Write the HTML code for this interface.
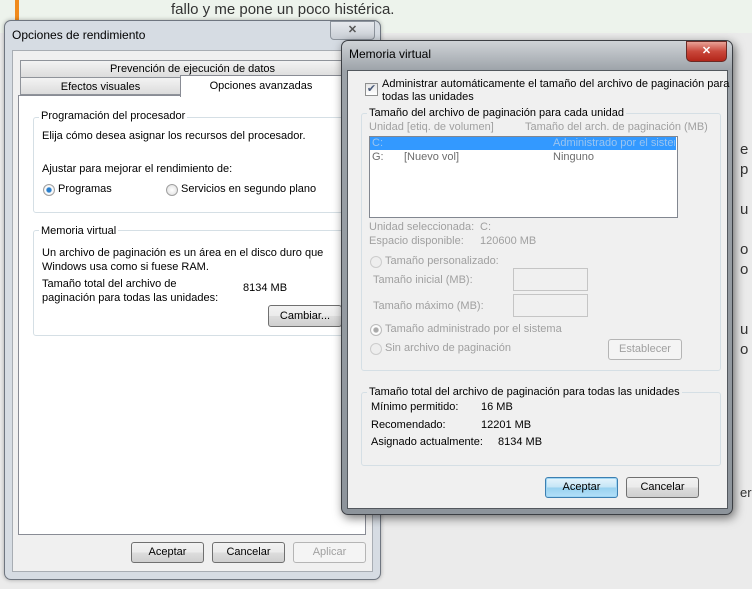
<!DOCTYPE html>
<html><head><meta charset="utf-8"><style>
*{box-sizing:border-box;margin:0;padding:0}
body{width:752px;height:589px;overflow:hidden;background:#ebebeb;font-family:"Liberation Sans",sans-serif;font-size:11px;color:#000;position:relative}
.a{position:absolute;white-space:nowrap}
.btn{position:absolute;border:1px solid #707070;border-radius:3px;background:linear-gradient(#f2f2f2 0,#ebebeb 50%,#dddddd 51%,#cfcfcf 100%);text-align:center;line-height:18px;font-size:11px}
.grp{position:absolute;border:1px solid #d5dfe5;border-radius:3px}
.lbl{position:absolute;background:inherit;padding:0 2px;white-space:nowrap}
.dis{color:#a0a0a0}
.radio{position:absolute;width:12px;height:12px;border-radius:50%;border:1px solid #a0a0a0;background:radial-gradient(#fff,#ddd)}
</style></head><body>
<div class="a" style="left:0;top:0;width:752px;height:33px;background:#edf3ec"></div>
<div class="a" style="left:15px;top:0;width:4px;height:22px;background:#f08a1c"></div>
<div class="a" style="left:171px;top:1px;font-size:15px;color:#333">fallo y me pone un poco histérica.</div>
<div class="a" style="left:740px;top:140px;font-size:15px;color:#333;line-height:20px">e<br>p<br><br>u<br><br>o<br>o<br><br><br>u<br>o<br></div>
<div class="a" style="left:740px;top:485px;font-size:13px;color:#333">er</div>

<div class="a" style="left:4px;top:20px;width:377px;height:560px;background:#d6dce3;border:1px solid #6f7680;border-radius:7px;box-shadow:0 0 4px rgba(0,0,0,.3)"></div>
<div class="a" style="left:12px;top:28px;font-size:12px">Opciones de rendimiento</div>
<div class="a" style="left:330px;top:21px;width:45px;height:19px;border:1px solid #8c939c;border-radius:0 0 4px 4px;background:linear-gradient(#e6e9ed,#c9ced5);text-align:center;color:#555;font-weight:bold;line-height:17px">✕</div>
<div class="a" style="left:12px;top:50px;width:361px;height:522px;background:#f0f0f0;border:1px solid #a8adb3"></div>
<div class="a" style="left:20px;top:60px;width:345px;height:17px;border:1px solid #8f939a;border-bottom:none;background:linear-gradient(#f3f3f3,#dcdcdc);text-align:center;line-height:17px">Prevención de ejecución de datos</div>
<div class="a" style="left:20px;top:77px;width:161px;height:18px;border:1px solid #8f939a;background:linear-gradient(#f3f3f3,#dcdcdc);text-align:center;line-height:18px">Efectos visuales</div>
<div class="a" style="left:18px;top:95px;width:348px;height:440px;background:#fff;border:1px solid #898c95"></div>
<div class="a" style="left:180px;top:75px;width:162px;height:22px;border:1px solid #898c95;border-bottom:none;background:#fff;text-align:center;line-height:20px">Opciones avanzadas</div>
<div class="grp" style="left:33px;top:117px;width:313px;height:96px;background:#fff"></div>
<div class="lbl" style="left:39px;top:110px;background:#fff">Programación del procesador</div>
<div class="a" style="left:42px;top:130px">Elija cómo desea asignar los recursos del procesador.</div>
<div class="a" style="left:42px;top:163px">Ajustar para mejorar el rendimiento de:</div>
<div class="radio" style="left:43px;top:184px;background:radial-gradient(#2a7fcc 0,#2a7fcc 30%,#fff 45%,#ddd)"></div>
<div class="a" style="left:58px;top:183px">Programas</div>
<div class="radio" style="left:166px;top:184px"></div>
<div class="a" style="left:181px;top:183px">Servicios en segundo plano</div>
<div class="grp" style="left:33px;top:230px;width:313px;height:106px;background:#fff"></div>
<div class="lbl" style="left:39px;top:225px;background:#fff">Memoria virtual</div>
<div class="a" style="left:42px;top:246px;line-height:14px">Un archivo de paginación es un área en el disco duro que<br>Windows usa como si fuese RAM.</div>
<div class="a" style="left:42px;top:277px;line-height:14px">Tamaño total del archivo de<br>paginación para todas las unidades:</div>
<div class="a" style="left:243px;top:282px">8134 MB</div>
<div class="btn" style="left:268px;top:305px;width:74px;height:22px;line-height:20px">Cambiar...</div>
<div class="btn" style="left:131px;top:542px;width:73px;height:21px">Aceptar</div>
<div class="btn" style="left:212px;top:542px;width:73px;height:21px">Cancelar</div>
<div class="btn" style="left:293px;top:542px;width:73px;height:21px;color:#a0a0a0;border-color:#b5b5b5;background:#f4f4f4">Aplicar</div>

<div class="a" style="left:341px;top:40px;width:392px;height:475px;background:linear-gradient(#cfd3d7,#9ca2a8 30px,#8d949b);border:1px solid #3c3f44;border-radius:7px;box-shadow:2px 3px 10px rgba(0,0,0,.55)"></div>
<div class="a" style="left:349px;top:47px;font-size:12px">Memoria virtual</div>
<div class="a" style="left:686px;top:41px;width:41px;height:21px;border:1px solid #6b2a25;border-radius:0 0 5px 5px;background:linear-gradient(#e8a297,#c9473a 50%,#b3261a);color:#fff;font-weight:bold;text-align:center;line-height:19px">✕</div>
<div class="a" style="left:347px;top:70px;width:381px;height:439px;background:#f0f0f0;border:1px solid #53585e"></div>
<div class="a" style="left:365px;top:83px;width:13px;height:13px;border:1px solid #8e8f8f;background:linear-gradient(#e6e6e6,#fff);color:#4a5a7a;font-size:11px;line-height:11px;text-align:center">✔</div>
<div class="a" style="left:382px;top:78px;line-height:13px">Administrar automáticamente el tamaño del archivo de paginación para<br>todas las unidades</div>
<div class="grp" style="left:361px;top:113px;width:360px;height:258px;background:#f0f0f0"></div>
<div class="lbl" style="left:367px;top:107px;background:#f0f0f0">Tamaño del archivo de paginación para cada unidad</div>
<div class="a dis" style="left:369px;top:121px">Unidad [etiq. de volumen]</div>
<div class="a dis" style="left:525px;top:121px">Tamaño del arch. de paginación (MB)</div>
<div class="a" style="left:369px;top:136px;width:309px;height:82px;background:#fff;border:1px solid #828790"></div>
<div class="a" style="left:370px;top:137px;width:306px;height:13px;background:#3399ff"></div>
<div class="a" style="left:372px;top:137px;color:#9ac4f0;line-height:13px">C:</div>
<div class="a" style="left:553px;top:137px;color:#9ac4f0;line-height:13px;width:122px;overflow:hidden">Administrado por el sistema</div>
<div class="a" style="left:372px;top:151px;color:#6d6d6d">G:</div>
<div class="a" style="left:404px;top:151px;color:#6d6d6d">[Nuevo vol]</div>
<div class="a" style="left:553px;top:151px;color:#6d6d6d">Ninguno</div>
<div class="a dis" style="left:369px;top:221px">Unidad seleccionada:</div><div class="a dis" style="left:480px;top:221px">C:</div>
<div class="a dis" style="left:369px;top:235px">Espacio disponible:</div><div class="a dis" style="left:480px;top:235px">120600 MB</div>
<div class="radio" style="left:370px;top:256px;border-color:#ccc;background:#eee"></div>
<div class="a dis" style="left:385px;top:255px">Tamaño personalizado:</div>
<div class="a dis" style="left:373px;top:274px">Tamaño inicial (MB):</div>
<div class="a" style="left:513px;top:268px;width:75px;height:23px;border:1px solid #c5c5c5"></div>
<div class="a dis" style="left:373px;top:300px">Tamaño máximo (MB):</div>
<div class="a" style="left:513px;top:294px;width:75px;height:23px;border:1px solid #c5c5c5"></div>
<div class="radio" style="left:370px;top:324px;border-color:#bbb;background:radial-gradient(#aaa 0,#aaa 30%,#fff 45%,#eee)"></div>
<div class="a dis" style="left:385px;top:323px">Tamaño administrado por el sistema</div>
<div class="radio" style="left:370px;top:343px;border-color:#ccc;background:#eee"></div>
<div class="a dis" style="left:385px;top:342px">Sin archivo de paginación</div>
<div class="btn" style="left:608px;top:339px;width:74px;height:21px;color:#a0a0a0;border-color:#b5b5b5;background:#f4f4f4">Establecer</div>
<div class="grp" style="left:361px;top:392px;width:360px;height:74px;background:#f0f0f0"></div>
<div class="lbl" style="left:367px;top:386px;background:#f0f0f0">Tamaño total del archivo de paginación para todas las unidades</div>
<div class="a" style="left:371px;top:401px">Mínimo permitido:</div><div class="a" style="left:481px;top:401px">16 MB</div>
<div class="a" style="left:371px;top:419px">Recomendado:</div><div class="a" style="left:481px;top:419px">12201 MB</div>
<div class="a" style="left:371px;top:436px">Asignado actualmente:</div><div class="a" style="left:498px;top:436px">8134 MB</div>
<div class="btn" style="left:545px;top:477px;width:73px;height:21px;border-color:#3c7fb1;background:linear-gradient(#e5f4fc,#c4e5f6 50%,#98d1ef 51%,#b3e0f9);box-shadow:inset 0 0 0 1px #9fd5f3">Aceptar</div>
<div class="btn" style="left:626px;top:477px;width:73px;height:21px">Cancelar</div>
</body></html>
